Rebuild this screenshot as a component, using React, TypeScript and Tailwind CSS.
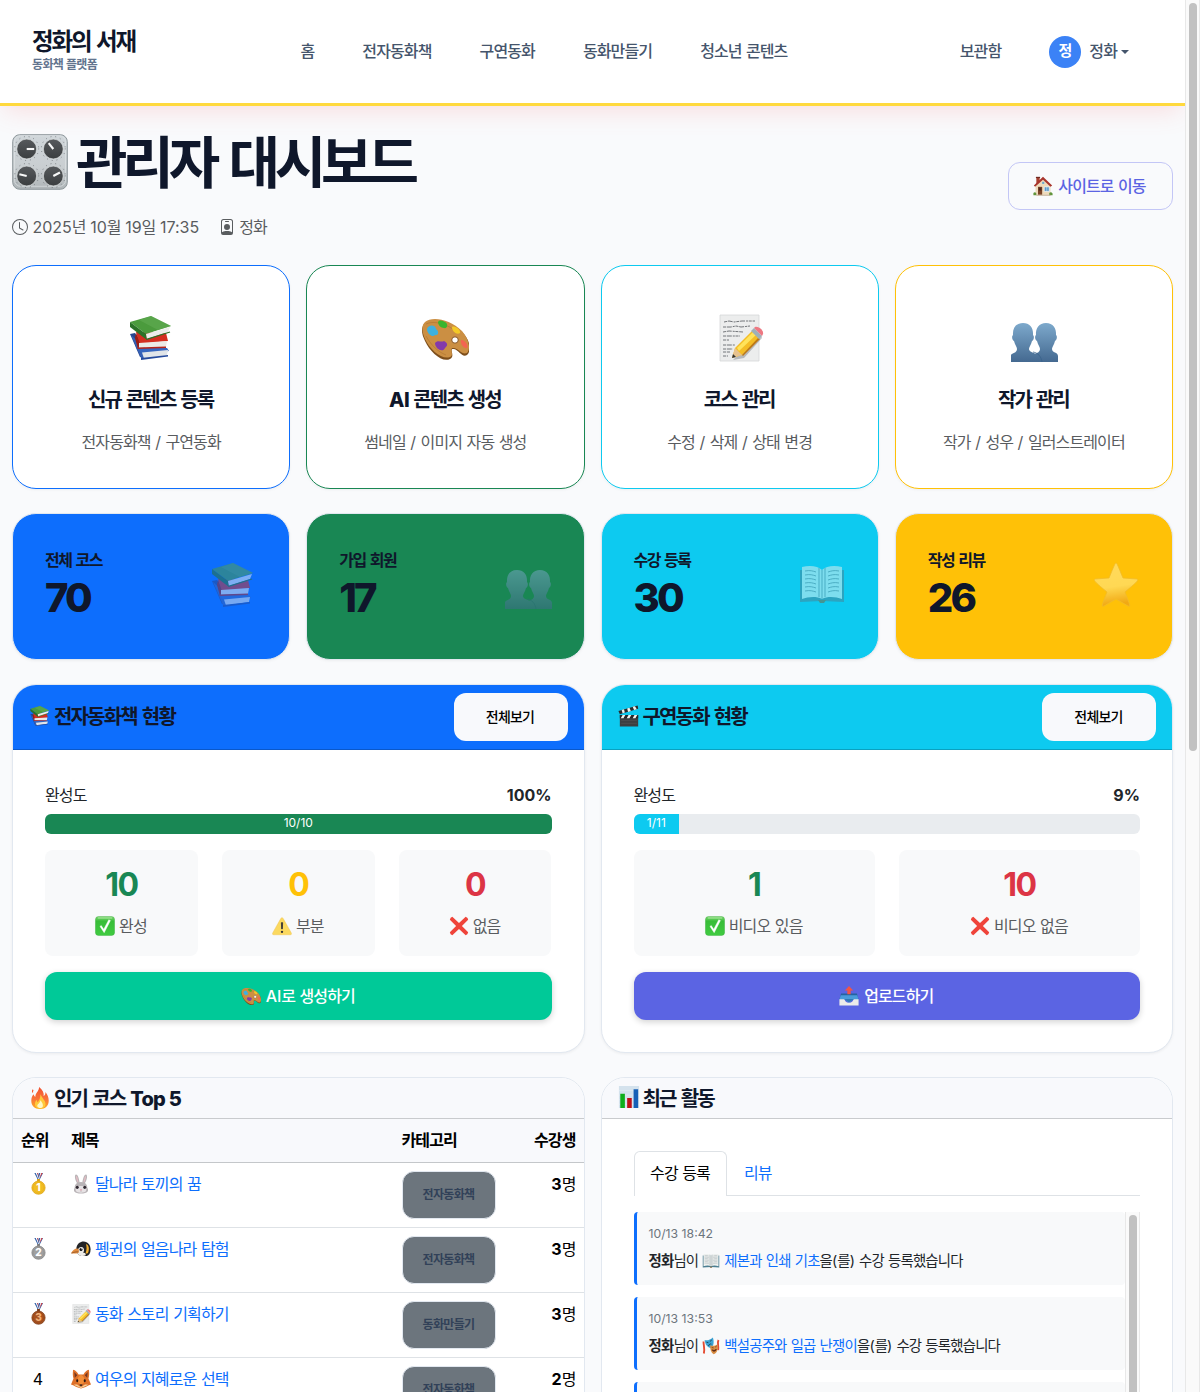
import React from "react";
import { BsClock, BsPersonBadge } from "react-icons/bs";

type Draw = { className?: string };

/* Hangul runs get tighter tracking than digits and Latin letters. */
function T({ children, head = false }: { children: string; head?: boolean }) {
  return (
    <>
      {children.split(/([가-힣]+)/).map((part, i) =>
        i % 2 === 1 ? (
          <span key={i} className={head ? "tracking-[-0.092em]" : "tracking-[-0.055em]"}>
            {part}
          </span>
        ) : (
          part
        ),
      )}
    </>
  );
}

function Svg({ className = "size-5", children }: Draw & { children: React.ReactNode }) {
  return (
    <svg viewBox="0 0 48 48" className={`shrink-0 ${className}`} aria-hidden="true">
      {children}
    </svg>
  );
}

const Books = (p: Draw) => (
  <Svg {...p}>
    <path d="M3 20 8 19 18 33 16 43 13 43Z" fill="#26468f" />
    <path d="M4 21 14 44 18 44 15 31Z" fill="#3560b5" />
    <path d="M11 34 40 34 42 37 16 41Z" fill="#3566c0" />
    <path d="M15 38.500 41 36 40 41 17 44.500Z" fill="#e1e5e9" />
    <path d="M14 44 41 41 41 42.500 14 46Z" fill="#254a9c" />
    <path d="M9 18 39 19 41 27 12 30Z" fill="#d42e20" />
    <path d="M9 19 13 30 11 35 8 24Z" fill="#9b1d14" />
    <path d="M12 29 40 27 39 33 12 34Z" fill="#eceae6" />
    <path d="M10 33.500 39 32.500 39 34 11 35Z" fill="#b5231b" />
    <path d="M3 8 24 2 44 12 19 20Z" fill="#4b9b3d" />
    <path d="M24 2 44 12 31 16 12 6Z" fill="#65ad55" opacity=".55" />
    <path d="M3 8 19 20 20 26 3 13Z" fill="#2b7228" />
    <path d="M19 20 43 13 41 18 20 25Z" fill="#eceeeb" />
    <path d="M19.500 25.300 43 18" stroke="#2b7228" strokeWidth="1.300" />
  </Svg>
);

const Palette = (p: Draw) => (
  <Svg {...p}>
    <path d="M4 9C11 3 29 6 41 18C49 26 51 36 46 41C41 44 38 36 33 35C27 34 35 42 29 45C21 49 9 38 4 27C0 19 0 13 4 9Z" fill="#7d4e1b" />
    <path d="M4 8C11 2 29 5 41 17C48 25 50 35 46 39C41 41 38 35 33 34C27 33 34 41 29 43C21 46 9 36 4 25C1 18 0 12 4 8Z" fill="#cb8f43" />
    <path d="M5 10c8-4 22 0 32 9M5 22c5 9 12 16 20 19" fill="none" stroke="#a96d2b" opacity=".5" />
    <ellipse cx="34" cy="26" rx="3.300" ry="3.200" fill="#fff" stroke="#86521d" />
    <path d="M6 15c1-4 8-5 9 0 4 3 2 7-1 6-2 3-8-1-8-6Z" fill="#3eb1df" />
    <path d="M17 8c2-3 5-1 7 0 4 2 2 7-1 6-3 0-6-3-6-6Z" fill="#39b52d" />
    <path d="M31 13c3-2 9 3 8 6-3 2-8-1-8-6Z" fill="#f3c927" />
    <path d="M40 26c3-1 8 5 6 8-3 1-7-4-6-8Z" fill="#f36551" />
    <path d="M14 29c3-4 6 0 9-2 5 3 3 5 1 7-2 5-10 1-10-5Z" fill="#843aab" />
  </Svg>
);

const Memo = (p: Draw) => (
  <Svg {...p}>
    <path d="M4 1h39v46H4Z" fill="#eceded" stroke="#d5d7d8" strokeWidth=".8" />
    <g stroke="#73767a" strokeWidth="1" strokeDasharray="3 .8 5 1 2 .7" fill="none">
      <path d="m8 8 5-1 5 1 8-1 13 0M7 13h8l5-1 5 1 9-1M7 18l6-1 14 1M7 22h17M7 26h6M7 31h12M7 35h10M7 38h7M7 42h5" />
    </g>
    <path d="m17 46 20-20 8-5 1 3-18 20Z" fill="#54575b" opacity=".35" />
    <path d="m16 44 3-10 18-18 7 7-18 18Z" fill="#f4bd26" />
    <path d="m21 34 17-17 3 3-18 17Z" fill="#ffe35b" />
    <path d="m26 41 16-17 2 1-17 17Z" fill="#bd7815" />
    <path d="m16 44 3-10 7 7Z" fill="#e7c28e" />
    <path d="m16 44 1-4 3 3Z" fill="#343434" />
    <path d="m35 17 3-3 8 8-3 3Z" fill="#9eb0b9" />
    <path d="m38 14 1-1c4-1 9 4 8 7l-1 2Z" fill="#ed7882" />
  </Svg>
);

const Busts = (p: Draw) => (
  <Svg {...p}>
    <defs>
      <linearGradient id="bust" x1="0" y1="0" x2="0" y2="1">
        <stop stopColor="#7da9cc" />
        <stop offset="1" stopColor="#446990" />
      </linearGradient>
    </defs>
    <path d="M36 9c7 0 10.500 5 10 12 1.500 1 1 5-1 6-1 4-3 6-3 8 0 4 6 3 6 7v6H24v-7c1-2 6-2 6-6 0-2-2-4-3-8-2-1-2.500-5-1-6-.5-7 3-12 10-12Z" fill="url(#bust)" />
    <path d="M13 9c7 0 10.500 5 10 12 1.500 1 1 5-1 6-1 4-3 6-3 8 0 5 13 3 13 13H1v-7c1-2 6-2 6-6 0-2-2-4-3-8-2-1-2.500-5-1-6-.5-7 3-12 10-12Z" fill="url(#bust)" />
    <path d="M23 38c5 1 8 4 9 10" fill="none" stroke="#38628b" strokeWidth=".8" />
  </Svg>
);

const OpenBook = (p: Draw) => (
  <Svg {...p}>
    <path d="M2 9 23 10 24 40 2 41ZM46 9 25 10 24 40 46 41Z" fill="#4c7f92" />
    <path d="M4 6C12 4 20 5 24 9v29C18 35 10 36 4 38ZM44 6C36 4 28 5 24 9v29c6-3 14-2 20 0Z" fill="#edf0ee" />
    <path d="M24 9v29M21 7v29M27 7v29" stroke="#9baaae" strokeWidth="1.300" />
    <path d="M7 10c5-1 8 0 11 1M7 14c5-1 8 0 11 1M7 18c5-1 8 0 11 1M7 22c5-1 8 0 11 1M7 26c5-1 8 0 11 1M7 30c5-1 8 0 11 1M41 10c-5-1-8 0-11 1M41 14c-5-1-8 0-11 1M41 18c-5-1-8 0-11 1M41 22c-5-1-8 0-11 1M41 26c-5-1-8 0-11 1M41 30c-5-1-8 0-11 1" fill="none" stroke="#6e7c83" strokeWidth=".8" />
    <path d="M20 39h8l-2 3h-4Z" fill="#7d6238" />
  </Svg>
);

const Star = (p: Draw) => (
  <Svg {...p}>
    <defs>
      <linearGradient id="star" x1="0" y1="0" x2=".15" y2="1">
        <stop stopColor="#fff3b2" />
        <stop offset=".6" stopColor="#fff0a0" />
        <stop offset="1" stopColor="#e5931f" />
      </linearGradient>
    </defs>
    <path d="M24 2c1 0 2 3 7 15l14 1c2 1 0 3-12 13 5 13 6 15 3 14L24 38 12 45c-3 1-2-1 3-14C3 21 1 19 3 18l14-1C22 5 23 2 24 2Z" fill="url(#star)" stroke="#e5b64d" strokeWidth=".8" />
  </Svg>
);

const Clapper = (p: Draw) => (
  <Svg {...p}>
    <path d="M4 22h40v25H4Z" fill="#3d3f41" />
    <path d="M1 13 43 1l1 7L4 20Z" fill="#292a2c" />
    <path d="m8 11 5-1.500 2 7-5 1.500ZM20 7.500l5-1.500 3 7-6 2ZM32 4l5-1.500 4 7-6 1.500Z" fill="#f2f2ed" />
    <path d="M4 22h40v7H4Z" fill="#252629" />
    <path d="m10 22 6 0-4 7H6ZM23 22h6l-4 7h-6ZM36 22h6l-4 7h-6Z" fill="#f2f2ed" />
    <path d="M7 34h34M7 40h34" stroke="#5c5c5c" strokeWidth="1" />
  </Svg>
);

const Check = (p: Draw) => (
  <Svg {...p}>
    <defs>
      <linearGradient id="ok" x1="0" y1="0" x2="0" y2="1">
        <stop stopColor="#85d977" />
        <stop offset=".25" stopColor="#38bd38" />
        <stop offset="1" stopColor="#40cb40" />
      </linearGradient>
    </defs>
    <rect x="1" y="1" width="46" height="46" rx="8" fill="url(#ok)" stroke="#34a938" />
    <path d="M8 5h32" stroke="#a8e79d" strokeWidth="2.500" strokeLinecap="round" />
    <path d="M12 25l3-2 6 9L33 9l4 2-15 29Z" fill="#fff" stroke="#fff" />
  </Svg>
);

const Warn = (p: Draw) => (
  <Svg {...p}>
    <path d="M24 4c2 0 3 2 4 4l18 32c2 4 0 5-3 5H5c-3 0-5-1-3-5L20 8c1-2 2-4 4-4Z" fill="#fbd95f" stroke="#f0c04a" />
    <path d="M22.500 16h3l-.7 15h-1.600Z" fill="#343335" stroke="#343335" strokeWidth="2" />
    <circle cx="24" cy="38" r="2.800" fill="#343335" />
  </Svg>
);

const Cross = (p: Draw) => (
  <Svg {...p}>
    <path d="M8 2 24 17 40 2q6 2 6 7L31 24l15 15q-1 6-6 7L24 31 8 46q-5-1-6-7l15-15L2 9Q3 3 8 2Z" fill="#ef443a" />
  </Svg>
);

const Outbox = (p: Draw) => (
  <Svg {...p}>
    <path d="M5 18h38l4 14H1Z" fill="#2563a0" />
    <path d="M4 22h40l3 11H33l-9 7-9-7H1Z" fill="#4a9bdb" />
    <path d="M1 32h12c2 6 4 8 11 8s9-2 11-8h12v15H1Z" fill="#ecebea" />
    <path d="M12 31h24l-12 8Z" fill="#2f78b6" />
    <path d="m24 0 10 11h-6v9h-8v-9h-6Z" fill="#f15448" />
  </Svg>
);

const Fire = (p: Draw) => (
  <Svg {...p}>
    <defs>
      <linearGradient id="fire" x1="0" y1="0" x2="0" y2="1">
        <stop stopColor="#f2502f" />
        <stop offset=".55" stopColor="#f9743a" />
        <stop offset="1" stopColor="#ffad1c" />
      </linearGradient>
    </defs>
    <path d="M22 0c8 6 11 13 10 20 3-2 4-5 4-9 5 6 7 13 7 19 0 11-7 18-19 18S5 41 5 30c0-6 2-11 5-14 1 3 2 5 4 5C14 12 22 10 22 0Z" fill="url(#fire)" />
    <path d="M8 12c-1-3 0-5 1-6" stroke="#f6572a" strokeWidth="2.500" fill="none" />
    <path d="M25 16c4 9 11 14 11 21 0 6-5 10-12 10s-11-4-11-10c0-4 2-7 4-9 0 4 1 5 2 5 4-4 6-9 6-17Z" fill="#ffc93a" />
    <path d="M25 29c5 6 6 10 5 14-2 4-10 4-12-1 0-5 5-5 7-13Z" fill="#fff7c4" />
  </Svg>
);

function Medal({ place }: { place: 1 | 2 | 3 }) {
  const fill = { 1: "#f1bd24", 2: "#a0a0a0", 3: "#a8521f" }[place];
  const edge = { 1: "#dba012", 2: "#7e7e7e", 3: "#793916" }[place];
  return (
    <svg viewBox="0 0 32 48" className="h-[22px] w-[15px]" aria-hidden="true">
      <path d="M7 0h8l3 16h-3ZM17 0h9l-8 16h-4Z" fill="#3460a8" />
      <path d="M10 0h3l4 14h-1ZM20 0h3l-6 14h-1Z" fill="#fff" />
      <path d="M13 0h2l2 10ZM22 0h3l-7 12Z" fill="#df4140" />
      <path d="M13 13h6v7h-6Z" fill={edge} />
      <circle cx="16" cy="32" r="14.500" fill={fill} stroke={edge} strokeWidth="1.500" />
      <circle cx="16" cy="32" r="11.500" fill="none" stroke={edge} strokeWidth="1" opacity=".6" />
      <text x="16" y="39.500" textAnchor="middle" fontFamily="Inter, sans-serif" fontWeight="800" fontSize="22" fill={place === 3 ? "#f3b178" : "#fff"}>
        {place}
      </text>
    </svg>
  );
}

const Rabbit = (p: Draw) => (
  <Svg {...p}>
    <path d="M17 25C8 14 8 1 12 1c5 0 8 12 9 22ZM31 25C40 14 40 1 36 1c-5 0-8 12-9 22Z" fill="#bab5b7" />
    <path d="M16 20C12 12 11 5 13 5c2 0 4 9 5 16ZM32 20c4-8 5-15 3-15-2 0-4 9-5 16Z" fill="#e3bcc4" />
    <path d="M24 19c10 0 16 7 15 14 5 7 1 14-15 14S4 40 9 33c-1-7 5-14 15-14Z" fill="#b9b4b7" />
    <path d="M24 29c10 0 15 6 12 12-2 5-22 5-24 0-3-6 2-12 12-12Z" fill="#e6e2e4" />
    <ellipse cx="15" cy="32" rx="3.500" ry="4" fill="#2f2830" />
    <ellipse cx="33" cy="32" rx="3.500" ry="4" fill="#2f2830" />
    <path d="m21 37 6 0-3 3Z" fill="#e07f91" />
    <path d="M24 40v3" stroke="#897d82" />
  </Svg>
);

const Penguin = (p: Draw) => (
  <Svg {...p}>
    <path d="M13 21C15 11 22 6 30 6c11 0 17 9 17 19 0 9-4 14-9 16H24c-8-3-12-10-11-20Z" fill="#232426" />
    <path d="M36 12c7 2 8 11 6 18-1 5-4 6-7 4 3-8 3-15 1-22Z" fill="#f4b02e" />
    <path d="M15 29c1-5 5-10 10-10 7 0 8 10 4 14 4-1 8 1 6 6-5 3-13 2-17-2-2-2-3-5-3-8Z" fill="#eeece8" />
    <path d="M15 23C9 23 4 27 0 34c6 2 14 1 18-1 2-4 1-9-3-10Z" fill="#e18a3c" />
    <path d="M1 34c6-2 12-4 17-3" stroke="#7a4521" strokeWidth="1.500" fill="none" />
    <circle cx="24" cy="25" r="3.700" fill="#0e0f12" />
    <circle cx="25" cy="23.500" r="1.200" fill="#fff" />
  </Svg>
);

const Fox = (p: Draw) => (
  <Svg {...p}>
    <path d="M5 2c6 1 10 6 13 11h12c3-5 7-10 13-11 1 8 1 15-1 21l6 14c-5 1-8 4-13 6l-11 4-11-4C8 41 5 38 0 37l6-14C4 17 4 10 5 2Z" fill="#de7028" />
    <path d="m8 7 7 8-6 6ZM40 7l-7 8 6 6Z" fill="#743620" />
    <path d="M24 14c-7 3-9 9-8 17l8 8 8-8c1-8-1-14-8-17Z" fill="#f28e38" />
    <path d="M7 38c5-2 10-1 14 4h6c4-5 9-6 14-4-5 4-11 5-17 8-6-3-12-4-17-8Z" fill="#f6cf98" />
    <ellipse cx="15" cy="28" rx="2.500" ry="3.500" fill="#2a1712" />
    <ellipse cx="33" cy="28" rx="2.500" ry="3.500" fill="#2a1712" />
    <path d="M20 38c2-2 6-2 8 0l-4 4Z" fill="#31201d" />
  </Svg>
);

const Chart = (p: Draw) => (
  <Svg {...p}>
    <path d="M2 0h44v48H2Z" fill="#d4e2ed" />
    <path d="M2 10h44M2 20h44M2 30h44M2 40h44" stroke="#eaf1f6" />
    <path d="M5 17h10v31H5Z" fill="#0eae1b" />
    <path d="M20 26h10v22H20Z" fill="#bf1118" />
    <path d="M34 7h10v41H34Z" fill="#1660b7" />
  </Svg>
);

const Masks = (p: Draw) => (
  <Svg {...p}>
    <path d="M4 12c0 10 4 18 1 32M44 8c-4 8 1 15-1 27" stroke="#e44b32" strokeWidth="5" fill="none" />
    <path d="M7 8c8 2 15-1 22-7 4 12 2 23-5 29C15 28 8 20 7 8Z" fill="#3ba2d4" />
    <path d="m12 14 5 1M21 12l5-4M17 24c3-6 6-6 8-5" stroke="#17455c" strokeWidth="2.500" fill="none" />
    <path d="M22 22c8 3 14 1 19-3 3 14-1 24-10 27-7-4-10-14-9-24Z" fill="#d98d42" />
    <path d="m26 28 5 1M35 27l4-3M27 34c4 3 9 1 11-2 0 6-8 9-11 2Z" fill="#522114" stroke="#522114" strokeWidth="1.600" />
  </Svg>
);

const House = (p: Draw) => (
  <Svg {...p}>
    <path d="M8 3h8v17H8Z" fill="#a9402f" />
    <path d="M7 2h10v3H7Z" fill="#6f2920" />
    <path d="M6 23 24 7l18 17v21H6Z" fill="#eedabb" />
    <path d="M24 2 2 23l3 3L24 9l18 17 4-3Z" fill="#a8352d" />
    <path d="M12 26h10v19H12Z" fill="#7b4227" />
    <path d="M14 28h6v7h-6Z" fill="#4d2a20" />
    <path d="M27 26h12v11H27Z" fill="#5a9acb" stroke="#fff" strokeWidth="1.500" />
    <path d="M33 26v11" stroke="#fff" />
    <path d="M22 14h5v5h-5Z" fill="#69a8d0" />
    <path d="M1 41q4-4 7 1v4H1ZM39 41q4-5 8 1v4h-8Z" fill="#60943a" />
    <path d="M8 45h34v2H8Z" fill="#b59b79" />
  </Svg>
);

function Knobs({ className = "size-14" }: Draw) {
  const dials: [number, number, number][] = [
    [14.7, 15, 90],
    [41.3, 15, -38],
    [14.7, 42, -77],
    [41.3, 42, 62],
  ];
  return (
    <svg viewBox="0 0 56 56" className={className} aria-hidden="true">
      <defs>
        <linearGradient id="panel" x1="0" y1="0" x2="0" y2="1">
          <stop stopColor="#d0d6da" />
          <stop offset=".6" stopColor="#c9ced1" />
          <stop offset="1" stopColor="#aeb4b7" />
        </linearGradient>
        <linearGradient id="dial" x1="0" y1="0" x2="0" y2="1">
          <stop stopColor="#56595c" />
          <stop offset="1" stopColor="#3b3e40" />
        </linearGradient>
      </defs>
      <rect x=".7" y=".7" width="54.600" height="54.600" rx="7" fill="url(#panel)" stroke="#8e979b" />
      <rect x="2.500" y="1.800" width="51" height="50.500" rx="6" fill="none" stroke="#e1e5e7" strokeWidth=".6" />
      {dials.map(([x, y, a]) => (
        <g key={`${x}-${y}`}>
          <circle cx={x} cy={y - 0.5} r="12" fill="none" stroke="#4a4f53" strokeWidth=".8" strokeDasharray=".9 3.950" opacity=".8" />
          <circle cx={x} cy={y} r="9.900" fill="url(#dial)" stroke="#e4e7e8" strokeWidth=".6" />
          <path d={`M${x} ${y}v-7.500`} stroke="#f8f8f8" strokeWidth="2.100" transform={`rotate(${a} ${x} ${y})`} />
        </g>
      ))}
    </svg>
  );
}

const navItems = ["홈", "전자동화책", "구연동화", "동화만들기", "청소년 콘텐츠"];

const actions = [
  { icon: Books, latin: "", title: "신규 콘텐츠 등록", sub: "전자동화책 / 구연동화", border: "border-[#0d6efd]" },
  { icon: Palette, latin: "AI", title: "콘텐츠 생성", sub: "썸네일 / 이미지 자동 생성", border: "border-[#198754]" },
  { icon: Memo, latin: "", title: "코스 관리", sub: "수정 / 삭제 / 상태 변경", border: "border-[#0dcaf0]" },
  { icon: Busts, latin: "", title: "작가 관리", sub: "작가 / 성우 / 일러스트레이터", border: "border-[#ffc107]" },
];

const stats = [
  { icon: Books, label: "전체 코스", value: "70", bg: "bg-[#0d6efd]" },
  { icon: Busts, label: "가입 회원", value: "17", bg: "bg-[#198754]" },
  { icon: OpenBook, label: "수강 등록", value: "30", bg: "bg-[#0dcaf0]" },
  { icon: Star, label: "작성 리뷰", value: "26", bg: "bg-[#ffc107]" },
];

const courses = [
  { rank: <Medal place={1} />, icon: Rabbit, title: "달나라 토끼의 꿈", cat: "전자동화책", n: "3" },
  { rank: <Medal place={2} />, icon: Penguin, title: "펭귄의 얼음나라 탐험", cat: "전자동화책", n: "3" },
  { rank: <Medal place={3} />, icon: Memo, title: "동화 스토리 기획하기", cat: "동화만들기", n: "3" },
  { rank: "4", icon: Fox, title: "여우의 지혜로운 선택", cat: "전자동화책", n: "2" },
];

const activity = [
  { time: "10/13 18:42", icon: OpenBook, title: "제본과 인쇄 기초" },
  { time: "10/13 13:53", icon: Masks, title: "백설공주와 일곱 난쟁이" },
];

type Tile = { value: string; color: string; icon: (p: Draw) => React.ReactElement; label: string };

function StatusCard(props: {
  icon: (p: Draw) => React.ReactElement;
  title: string;
  headBg: string;
  percent: number;
  barText: string;
  barBg: string;
  tiles: Tile[];
  button: React.ReactNode;
  buttonBg: string;
}) {
  const Icon = props.icon;
  return (
    <section className="h-[369px] flex-1 overflow-hidden rounded-3xl border border-slate-200 bg-white shadow-[0_1px_3px_rgba(0,0,0,0.06)]">
      <div className={`flex h-[65px] items-center border-b border-black/20 px-4 ${props.headBg}`}>
        <Icon className="mb-0.5 size-[22px]" />
        <h2 className="ml-[3px] text-xl font-semibold text-slate-900">
          <T head>{props.title}</T>
        </h2>
        <button className="ml-auto h-12 w-[114px] rounded-xl bg-[#f8f9fc] pr-px text-sm font-medium text-black">
          <T>전체보기</T>
        </button>
      </div>
      <div className="p-8">
        <div className="mb-2 flex h-6 items-center justify-between pt-0.5 text-[#212529]">
          <span>
            <T>완성도</T>
          </span>
          <b className="font-bold">{props.percent}%</b>
        </div>
        <div className="mb-4 flex h-5 overflow-hidden rounded-md bg-[#e9ecef]">
          <div
            className={`text-center text-xs leading-[18px] text-white ${props.barBg}`}
            style={{ width: `${props.percent}%` }}
          >
            {props.barText}
          </div>
        </div>
        <div className="mb-4 flex gap-6">
          {props.tiles.map((t) => (
            <div key={t.label} className="flex h-[106px] flex-1 flex-col items-center rounded-lg bg-[#f8f9fa] pt-4">
              <div className={`h-[46px] text-[32px] leading-[38px] font-bold tracking-[-0.05em] ${t.color}`}>{t.value}</div>
              <div className="flex h-7 items-center gap-1 pr-px text-[#595c5f]">
                <t.icon />
                <span className="-mt-px">
                  <T>{t.label}</T>
                </span>
              </div>
            </div>
          ))}
        </div>
        <button
          className={`flex h-12 w-full items-center justify-center gap-[5px] rounded-xl pr-px font-medium text-white shadow-[0_2px_6px_rgba(0,0,0,0.18)] ${props.buttonBg}`}
        >
          {props.button}
        </button>
      </div>
    </section>
  );
}

export default function App() {
  return (
    <div className="flex h-[1392px] overflow-hidden bg-[#f9fafc] font-[Inter,'Noto_Sans_CJK_KR',sans-serif] text-base leading-6">
      <div className="w-[1185px] shrink-0">
        <header className="flex h-[106px] items-center border-b-[3px] border-[#ffd93d] bg-white px-8 text-slate-600 shadow-[0_8px_24px_-4px_rgba(255,107,107,0.2)]">
          <div className="w-[268.500px] pb-0.5">
            <div className="text-[23.500px] leading-7 font-bold whitespace-nowrap text-slate-900">
              <T head>정화의 서재</T>
            </div>
            <div className="text-xs leading-[18px] font-bold text-slate-500">
              <T>동화책 플랫폼</T>
            </div>
          </div>
          <nav className="flex gap-12 pb-0.5 font-medium">
            {navItems.map((n) => (
              <span key={n}>
                <T>{n}</T>
              </span>
            ))}
          </nav>
          <div className="mr-6 ml-auto flex items-center font-medium">
            <span className="mr-12 pb-0.5">
              <T>보관함</T>
            </span>
            <span className="mr-2 flex size-8 items-center justify-center rounded-full bg-[#3b82f6] text-[15px] font-semibold text-white">
              <span className="pb-0.5">정</span>
            </span>
            <span className="pb-0.5">
              <T>정화</T>
            </span>
            <span className="ml-1 border-x-[4.500px] border-t-[4.500px] border-x-transparent border-t-slate-600" />
          </div>
        </header>

        <main className="flex flex-col gap-6 px-3 pt-6">
          <div className="flex h-[111px] justify-between">
            <div>
              <div className="flex h-[66px] items-center">
                <Knobs className="mb-0.5 size-14" />
                <h1 className="ml-2 text-[56px] leading-none font-bold text-slate-900">
                  <T head>관리자 대시보드</T>
                </h1>
              </div>
              <div className="mt-[19px] flex items-center text-[#595c5f]">
                <BsClock className="mr-[4.500px]" />
                <span>
                  <T>2025년 10월 19일 17:35</T>
                </span>
                <BsPersonBadge className="mr-1 ml-5" />
                <span>
                  <T>정화</T>
                </span>
              </div>
            </div>
            <button className="mt-8 flex h-12 w-[165px] items-center justify-center gap-[5px] rounded-xl border border-[#c3c6f6] pr-0.5 font-medium text-[#5b64e3]">
              <House />
              <span>
                <T>사이트로 이동</T>
              </span>
            </button>
          </div>

          <div className="grid grid-cols-4 gap-4">
            {actions.map((a) => (
              <div
                key={a.title}
                className={`flex h-[224px] flex-col items-center rounded-3xl border bg-white pt-12 shadow-[0_1px_3px_rgba(0,0,0,0.05)] ${a.border}`}
              >
                <a.icon className="size-12" />
                <h3 className="mt-[26px] pr-px text-xl leading-6 font-bold text-slate-900">
                  {a.latin && <span className="mr-1 font-extrabold tracking-[-0.02em]">{a.latin}</span>}
                  <T head>{a.title}</T>
                </h3>
                <p className="mt-[18px] text-[#595c5f]">
                  <T>{a.sub}</T>
                </p>
              </div>
            ))}
          </div>

          <div className="grid grid-cols-4 gap-4">
            {stats.map((s) => (
              <div
                key={s.label}
                className={`flex h-[147px] justify-between rounded-3xl border border-slate-200 px-8 pt-[34px] text-slate-900 shadow-[0_1px_3px_rgba(0,0,0,0.05)] ${s.bg}`}
              >
                <div>
                  <div className="font-semibold">
                    <T head>{s.label}</T>
                  </div>
                  <div className="mt-[2px] text-[40px] leading-[48px] font-extrabold tracking-[-0.07em]">{s.value}</div>
                </div>
                <s.icon className="mt-[13px] size-12 opacity-50" />
              </div>
            ))}
          </div>

          <div className="flex gap-4">
            <StatusCard
              icon={Books}
              title="전자동화책 현황"
              headBg="bg-[#0d6efd]"
              percent={100}
              barText="10/10"
              barBg="bg-[#198754]"
              tiles={[
                { value: "10", color: "text-[#198754]", icon: Check, label: "완성" },
                { value: "0", color: "text-[#ffc107]", icon: Warn, label: "부분" },
                { value: "0", color: "text-[#dc3545]", icon: Cross, label: "없음" },
              ]}
              button={
                <>
                  <Palette />
                  <span>
                    <T>AI로 생성하기</T>
                  </span>
                </>
              }
              buttonBg="bg-[#00c998]"
            />
            <StatusCard
              icon={Clapper}
              title="구연동화 현황"
              headBg="bg-[#0dcaf0]"
              percent={9}
              barText="1/11"
              barBg="bg-[#0dcaf0]"
              tiles={[
                { value: "1", color: "text-[#198754]", icon: Check, label: "비디오 있음" },
                { value: "10", color: "text-[#dc3545]", icon: Cross, label: "비디오 없음" },
              ]}
              button={
                <>
                  <Outbox />
                  <span>
                    <T>업로드하기</T>
                  </span>
                </>
              }
              buttonBg="bg-[#5b64e3]"
            />
          </div>

          <div className="flex gap-4">
            <section className="flex-1 overflow-hidden rounded-t-3xl border border-slate-200 bg-white">
              <div className="flex h-[41px] items-center border-b border-[#c9cbce] bg-[#f8f9fc] px-4">
                <Fire className="size-[22px]" />
                <h2 className="mt-px ml-[3px] text-xl font-semibold text-slate-900">
                  <T head>인기 코스</T> <span className="font-extrabold tracking-[-0.04em]">Top 5</span>
                </h2>
              </div>
              <table className="w-full table-fixed text-black">
                <thead>
                  <tr className="h-[43px] border-b border-[#c4c7ca] bg-[#f8f9fc] text-left font-semibold">
                    <th className="w-[50px] pl-2 font-semibold"><T>순위</T></th>
                    <th className="pl-2 font-semibold"><T>제목</T></th>
                    <th className="w-[103px] font-semibold"><T>카테고리</T></th>
                    <th className="w-[79px] pr-2 text-right font-semibold"><T>수강생</T></th>
                  </tr>
                </thead>
                <tbody>
                  {courses.map((c) => (
                    <tr key={c.title} className="h-[65px] border-b border-[#dee2e6] align-top">
                      <td className="pt-2">
                        <div className="flex h-[26px] items-center justify-center">{c.rank}</div>
                      </td>
                      <td className="pt-2 pl-2">
                        <div className="flex h-[26px] items-center gap-1 text-[#0d6efd]">
                          <c.icon />
                          <span>
                            <T>{c.title}</T>
                          </span>
                        </div>
                      </td>
                      <td className="pt-2">
                        <div className="flex h-12 w-[94px] items-center justify-center rounded-xl border border-slate-200 bg-[#6c757d] pt-px text-xs font-semibold text-slate-700">
                          <span>
                            <T>{c.cat}</T>
                          </span>
                        </div>
                      </td>
                      <td className="pt-[9px] pr-2 text-right">
                        <b className="font-bold">{c.n}</b>
                        <T>명</T>
                      </td>
                    </tr>
                  ))}
                </tbody>
              </table>
            </section>

            <section className="flex-1 overflow-hidden rounded-t-3xl border border-slate-200 bg-white">
              <div className="flex h-[41px] items-center border-b border-[#c9cbce] bg-[#f8f9fc] px-4">
                <Chart className="mb-0.5 size-[22px]" />
                <h2 className="mt-px ml-[3px] text-xl font-semibold text-slate-900">
                  <T head>최근 활동</T>
                </h2>
              </div>
              <div className="px-8 pt-8">
                <div className="flex h-[45px] border-b border-[#dee2e6]">
                  <div className="-mb-px w-[93px] rounded-t-md border border-b-0 border-[#dee2e6] bg-white pt-[9px] text-center text-black">
                    <T>수강 등록</T>
                  </div>
                  <div className="pt-[10px] pl-[17.500px] text-[#0d6efd]">
                    <T>리뷰</T>
                  </div>
                </div>
                <div className="mt-4 flex h-[400px]">
                  <div className="flex-1">
                    {activity.map((a) => (
                      <div key={a.time} className="mb-3 h-[73px] rounded border-l-[3px] border-[#0d6efd] bg-[#f8f9fa] pt-3 pl-3 text-[14.400px]">
                        <div className="text-[12.250px] leading-5 text-[#6c757d]">{a.time}</div>
                        <div className="mt-1 flex h-[25px] items-center text-[#212529]">
                          <b className="font-bold"><T>정화</T></b>
                          <T>님이</T>
                          <a.icon className="mx-1 size-[18px]" />
                          <span className="text-[#0d6efd]">
                            <T>{a.title}</T>
                          </span>
                          <span>
                            <T>을(를) 수강 등록했습니다</T>
                          </span>
                        </div>
                      </div>
                    ))}
                    <div className="h-[73px] rounded border-l-[3px] border-[#0d6efd] bg-[#f8f9fa]" />
                  </div>
                  <div className="flex w-[15px] justify-center border-x border-[#e8e8e8] bg-[#fafafa] pt-[3px]">
                    <div className="h-[300px] w-2 rounded-full bg-[#c1c1c1]" />
                  </div>
                </div>
              </div>
            </section>
          </div>
        </main>
      </div>
      <div className="flex flex-1 justify-center border-x border-[#e8e8e8] bg-[#fafafa] pt-[3px]">
        <div className="h-[748px] w-2 rounded-full bg-[#c1c1c1]" />
      </div>
    </div>
  );
}
